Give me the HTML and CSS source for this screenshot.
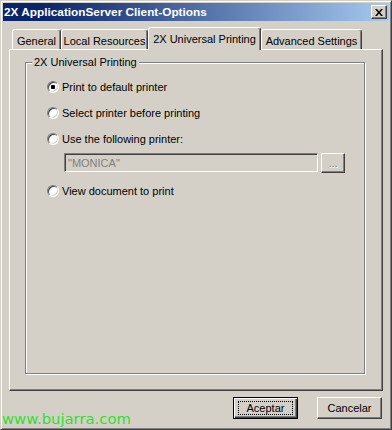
FILE: index.html
```html
<!DOCTYPE html>
<html lang="en">
<head>
  <meta charset="UTF-8">
  <title>2X ApplicationServer Client-Options</title>
  <link rel="stylesheet" href="styles.css">
</head>
<body>

  <div class="window">
    <div class="titlebar">
      <span class="title">2X ApplicationServer Client-Options</span>
      <div class="close">
        <svg width="8" height="7" viewBox="0 0 8 7">
          <path d="M0 0h2l2 2.5L6 0h2L5 3.5 8 7H6L4 4.5 2 7H0l3-3.5z" fill="#000"/>
        </svg>
      </div>
    </div>

    <div class="content">
      <div class="tabs">
        <div class="tab tab-general">General</div>
        <div class="tab tab-local">Local Resources</div>
        <div class="tab tab-printing active">2X Universal Printing</div>
        <div class="tab tab-advanced">Advanced Settings</div>
      </div>

      <div class="panel">
        <fieldset class="group">
          <legend>2X Universal Printing</legend>
          <label class="option"><input type="radio" name="print" checked>Print to default printer</label>
          <label class="option"><input type="radio" name="print">Select printer before printing</label>
          <label class="option"><input type="radio" name="print">Use the following printer:</label>
          <div class="printer-row">
            <input class="printer-field" type="text" value="&quot;MONICA&quot;" disabled>
            <div class="browse">...</div>
          </div>
          <label class="option"><input type="radio" name="print">View document to print</label>
        </fieldset>
      </div>

      <div class="actions">
        <div class="btn default"><span class="focus">Aceptar</span></div>
        <div class="btn">Cancelar</div>
      </div>
    </div>

    <div class="watermark">www.bujarra.com</div>
  </div>

</body>
</html>
```

FILE: styles.css
```css
:root {
  --face: #d4d0c8;
  --shadow: #808080;
  --dark: #404040;
  --light: #ffffff;
}

* { margin: 0; padding: 0; box-sizing: border-box; }

body {
  font-family: 'Liberation Sans', Arial, sans-serif;
  font-size: 11px;
  color: #000;
  background: var(--face);
}

.window {
  position: relative;
  width: 392px;
  height: 430px;
  padding: 2px;
  background: var(--face);
  border: 1px solid;
  border-color: var(--face) var(--dark) var(--dark) var(--face);
  box-shadow: inset 1px 1px var(--light), inset -1px -1px var(--shadow);
}

.titlebar {
  display: flex;
  align-items: center;
  justify-content: space-between;
  height: 18px;
  padding: 0 2px 0 1px;
  background: linear-gradient(to right, #0a246a 10%, #a6caf0);
  color: white;
  font-size: 11.8px;
  font-weight: bold;
}

.close {
  display: flex;
  align-items: center;
  justify-content: center;
  width: 16px;
  height: 14px;
  background: var(--face);
  border: 1px solid;
  border-color: var(--light) var(--dark) var(--dark) var(--light);
  box-shadow: inset -1px -1px var(--shadow);
}

.content {
  padding: 6px 6px 0 6px;
}

/* tab strip */
.tabs {
  display: flex;
  align-items: flex-end;
  height: 22px;
  padding-left: 3px;
}

.tab {
  display: flex;
  align-items: center;
  justify-content: center;
  height: 20px;
  padding-top: 2px;
  border: 1px solid;
  border-bottom: none;
  border-color: var(--light) var(--dark) transparent var(--light);
  border-radius: 3px 3px 0 0;
  box-shadow: inset -1px 0 var(--shadow);
}

.tab.active {
  position: relative;
  z-index: 1;
  height: 23px;
  margin-bottom: -1px;
  padding-top: 0;
  background: var(--face);
}

.tab-general { width: 49px; }
.tab-local { width: 87px; }
.tab-printing { width: 113px; }
.tab-advanced { width: 101px; }

.panel {
  height: 342px;
  padding: 6px 17px 0 15px;
  border: 1px solid;
  border-color: var(--light) var(--dark) var(--dark) var(--light);
  box-shadow: inset -1px -1px var(--shadow);
}

/* group box */
.group {
  height: 318px;
  padding: 10px 0 0 0;
  border: 1px solid var(--shadow);
  box-shadow: inset 1px 1px var(--light), 1px 1px var(--light);
}

.group legend {
  margin-left: 6px;
  padding: 0 2px;
  line-height: 13px;
  background: var(--face);
}

.option {
  display: flex;
  align-items: center;
  gap: 3px;
  height: 16px;
  margin: 0 0 10px 21px;
}

.option input {
  appearance: none;
  width: 12px;
  height: 12px;
  border-radius: 50%;
  background: white;
  border: 1px solid;
  border-color: var(--shadow) var(--light) var(--light) var(--shadow);
  box-shadow: inset 1px 1px var(--dark), inset -1px -1px var(--face);
}

.option input:checked {
  background: radial-gradient(circle, #000 2px, #fff 2.5px);
}

.printer-row {
  display: flex;
  gap: 3px;
  margin: -4px 0 10px 38px;
}

.printer-field {
  width: 254px;
  height: 19px;
  padding: 0 3px;
  font: inherit;
  color: var(--shadow);
  background: var(--face);
  border: 1px solid;
  border-color: var(--shadow) var(--light) var(--light) var(--shadow);
  box-shadow: inset 1px 1px var(--dark), inset -1px -1px var(--face);
  outline: none;
}

.browse {
  display: flex;
  align-items: center;
  justify-content: center;
  width: 24px;
  height: 20px;
  color: var(--shadow);
  text-shadow: 1px 1px var(--light);
  border: 1px solid;
  border-color: var(--light) var(--dark) var(--dark) var(--light);
  box-shadow: inset -1px -1px var(--shadow);
}

/* dialog buttons */
.actions {
  display: flex;
  justify-content: flex-end;
  gap: 19px;
  padding: 6px 1px 0 0;
}

.btn {
  display: flex;
  align-items: center;
  justify-content: center;
  width: 65px;
  height: 22px;
  background: var(--face);
  border: 1px solid;
  border-color: var(--light) var(--dark) var(--dark) var(--light);
  box-shadow: inset -1px -1px var(--shadow);
}

.btn.default {
  border-color: #000;
  box-shadow: inset 1px 1px var(--light), inset -1px -1px var(--dark), inset -2px -2px var(--shadow);
}

.focus {
  display: flex;
  align-items: center;
  justify-content: center;
  width: 55px;
  height: 14px;
  border: 1px dotted #000;
}

.watermark {
  position: absolute;
  left: 1px;
  top: 409px;
  font-family: 'DejaVu Sans', sans-serif;
  font-size: 14.8px;
  line-height: 17px;
  color: #2ee02e;
}
```
